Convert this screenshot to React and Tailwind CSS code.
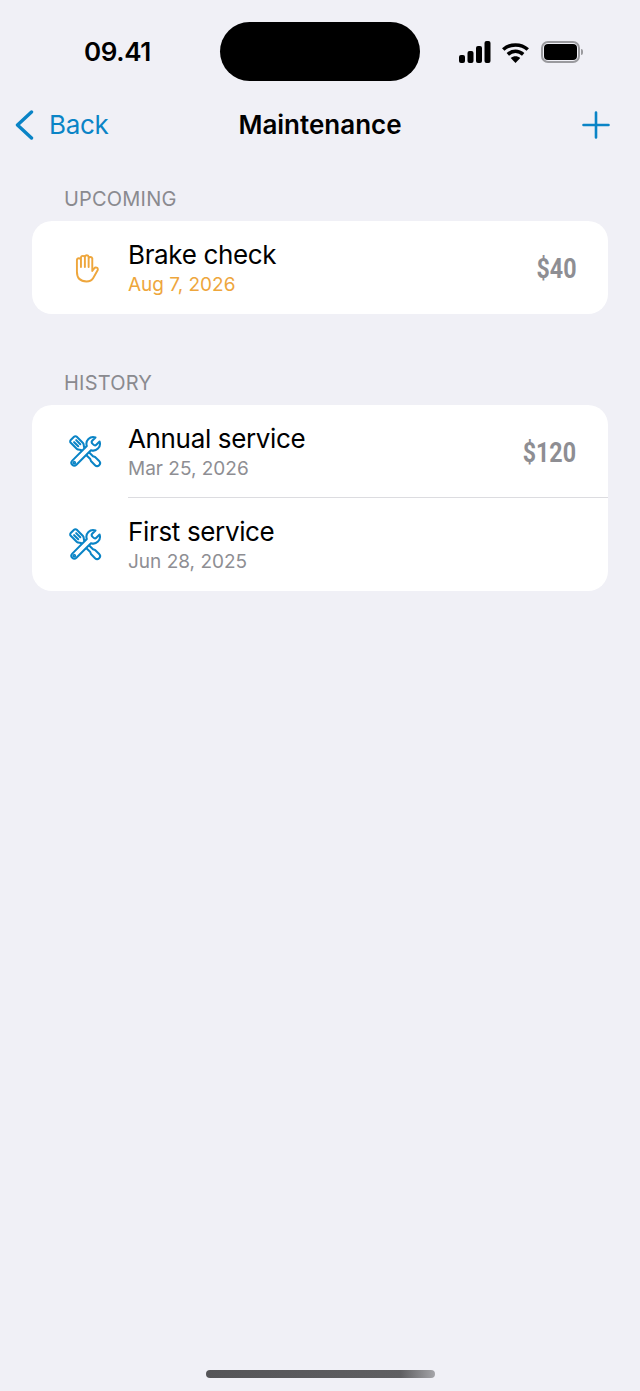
import React from "react";

const sf = "font-['Inter','Liberation_Sans',sans-serif]";

function Tools() {
  return (
    <svg width="33" height="33" viewBox="0 0 34 34" fill="none" stroke="#0a84c6" strokeWidth="2.1" strokeLinejoin="round" strokeLinecap="round" className="-ml-[1px]">
      <g transform="translate(3.5 3.5) rotate(45)">
        <path d="M2 -4.4 H11 C13 -4.4 14 -2 15.5 -2 H28 L30 -3 H36 a3 3 0 0 1 0 6 H30 L28 2 H15.5 C14 2 13 4.4 11 4.4 H2 a2 2 0 0 1 -2 -2 V-2.4 a2 2 0 0 1 2 -2 Z" />
        <path d="M4 -1.5 H10 M4 1.5 H10" />
      </g>
      <g transform="translate(5.5 28.5) rotate(-45)">
        <path fill="#ffffff" d="M0 -3 H21.2 A7 7 0 0 1 33.8 -3 H29 Q27 -3 27 0 Q27 3 29 3 H33.8 A7 7 0 0 1 21.2 3 H0 A3 3 0 0 1 0 -3 Z" />
        <circle cx="0" cy="0" r="0.8" />
      </g>
    </svg>
  );
}

function HandIcon() {
  return (
    <svg width="24" height="30" viewBox="0 0 25 30" fill="none" stroke="#eea63c" strokeWidth="2" strokeLinecap="round" strokeLinejoin="round" className="ml-[2px]">
      <path d="M6.2 14 V7 a2.1 2.1 0 0 0 -4.2 0 V19 C2 26 6 29 12 29 C15 29 17.5 28 19 25.4 L23.4 17.6 a2 2 0 0 0 -3.2 -2.4 L18 18 V5 a2 2 0 0 0 -3.8 0 M10.3 14 V3.2 a2 2 0 0 1 3.9 0 V14 M6.2 7 V4.4 a2 2 0 0 1 4.1 0" />
    </svg>
  );
}

function Row({ icon, title, date, dateClass, price, divider }) {
  return (
    <div className="flex h-[93px] items-stretch">
      <div className="flex w-[96px] shrink-0 items-center justify-center pl-[12px]">{icon}</div>
      <div className={`flex min-w-0 flex-1 items-center pr-[32px] ${divider ? "border-b border-[#dcdce0]" : ""}`}>
        <div className="flex flex-1 flex-col pt-[2px]">
          <span className="text-[26px] leading-[32px] tracking-[-0.35px] text-black">{title}</span>
          <span className={`text-[19px] leading-[27px] ${dateClass}`}>{date}</span>
        </div>
        {price && (
          <span className="origin-right scale-x-[0.86] pt-[4px] font-['Roboto',sans-serif] text-[27px] font-bold text-[#8e8e93]">{price}</span>
        )}
      </div>
    </div>
  );
}

function Section({ label, children, className }) {
  return (
    <section className={className}>
      <h2 className="pl-[64px] text-[20px] leading-[26px] tracking-[0.2px] text-[#8a8a8f]">{label}</h2>
      <div className="mx-[32px] mt-[9px] overflow-hidden rounded-[20px] bg-white">{children}</div>
    </section>
  );
}

export default function App() {
  return (
    <div className={`relative flex h-[1391px] w-[640px] flex-col overflow-hidden bg-[#f0f0f6] ${sf}`}>
      <div className="flex h-[105px] shrink-0 items-start">
        <div className="w-[220px] shrink-0 pt-[36px] pl-[84px]">
          <span className="text-[26px] leading-[32px] font-semibold tracking-[-0.4px] text-black">09.41</span>
        </div>
        <div className="mt-[22px] h-[59px] w-[200px] shrink-0 rounded-[30px] bg-black" />
        <div className="mt-[41px] ml-[39px] flex items-center">
          <svg width="32" height="22" viewBox="0 0 32 22" fill="#000">
            <rect x="0" y="14" width="6" height="8" rx="2" />
            <rect x="8.5" y="10" width="6" height="12" rx="2" />
            <rect x="17" y="5" width="6" height="17" rx="2" />
            <rect x="25.5" y="0" width="6" height="22" rx="2" />
          </svg>
          <svg width="27" height="21" viewBox="0 0 26 20" fill="none" stroke="#000" strokeWidth="3.4" className="ml-[11px]">
            <path d="M1.2 7.2 C7.5 1.2 18.5 1.2 24.8 7.2" />
            <path d="M5.6 11.8 C10 7.8 16 7.8 20.4 11.8" />
            <path d="M13 20 L8.4 15.2 C11 13 15 13 17.6 15.2 Z" fill="#000" stroke="none" />
          </svg>
          <div className="ml-[12px] flex items-center gap-[1px]">
            <div className="flex h-[22px] w-[39px] items-center justify-center rounded-[7px] border-2 border-[#9a9a9e]">
              <div className="h-[16px] w-[33px] rounded-[4px] bg-black" />
            </div>
            <div className="h-[6px] w-[2px] rounded-r-full bg-[#9a9a9e]" />
          </div>
        </div>
      </div>

      <div className="relative flex h-[40px] shrink-0 items-center justify-between pl-[15px] pr-[30px]">
        <div className="flex items-center text-[#0a84c6]">
          <svg width="19" height="30" viewBox="0 0 19 30" fill="none" stroke="currentColor" strokeWidth="3.4" strokeLinecap="round" strokeLinejoin="round">
            <path d="M16.5 2 L2.5 15 L16.5 28" />
          </svg>
          <span className="ml-[15px] text-[26px] leading-[34px] tracking-[-0.3px]">Back</span>
        </div>
        <span className="absolute left-0 right-0 text-center text-[26px] leading-[34px] font-semibold text-black">Maintenance</span>
        <svg width="28" height="28" viewBox="0 0 28 28" fill="none" stroke="#0a84c6" strokeWidth="2.6" strokeLinecap="round">
          <path d="M14 1.5 V26.5 M1.5 14 H26.5" />
        </svg>
      </div>

      <Section label="UPCOMING" className="mt-[41px]">
        <Row
          icon={<HandIcon />}
          title="Brake check"
          date="Aug 7, 2026"
          dateClass="text-[#eea63c]"
          price="$40"
        />
      </Section>

      <Section label="HISTORY" className="mt-[56px]">
        <Row
          icon={<Tools />}
          title="Annual service"
          date="Mar 25, 2026"
          dateClass="text-[#8e8e93]"
          price="$120"
          divider
        />
        <Row icon={<Tools />} title="First service" date="Jun 28, 2025" dateClass="text-[#8e8e93]" />
      </Section>

      <div className="absolute bottom-[13px] left-[206px] h-[8px] w-[229px] rounded-full bg-gradient-to-r from-[#555558] via-[#5f5f62] via-85% to-[#a5a5a9]" />
    </div>
  );
}
